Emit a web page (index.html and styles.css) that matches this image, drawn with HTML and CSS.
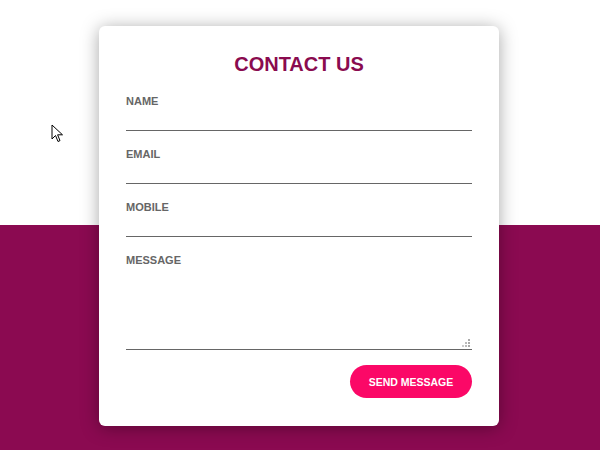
FILE: index.html
```html
<!DOCTYPE html>
<html>
<head>
	<title>Contact Us</title>
	<link rel="stylesheet" href="styles.css">
</head>
<body>
	<svg class="pointer" width="14" height="20" viewBox="0 0 14 20">
		<path d="M1 1 L1 15 L4.5 11.5 L7 17.5 L9 16.6 L6.6 10.8 L11.5 10.8 Z" fill="#fff" stroke="#000" stroke-width="1" stroke-linejoin="miter"/>
	</svg>
	<form class="contact-card">
		<h1 class="title">CONTACT US</h1>
		<div class="field">
			<label for="name">NAME</label>
			<input type="text" id="name" name="name">
		</div>
		<div class="field">
			<label for="email">EMAIL</label>
			<input type="text" id="email" name="email">
		</div>
		<div class="field">
			<label for="mobile">MOBILE</label>
			<input type="text" id="mobile" name="mobile">
		</div>
		<div class="field message">
			<label for="message">MESSAGE</label>
			<textarea id="message" name="message"></textarea>
			<svg class="grip" width="8" height="8" viewBox="0 0 8 8">
				<rect x="6" y="0" width="2" height="2" fill="#aaa"/>
				<rect x="3" y="3" width="2" height="2" fill="#bbb"/>
				<rect x="6" y="3" width="2" height="2" fill="#aaa"/>
				<rect x="0" y="6" width="2" height="2" fill="#ccc"/>
				<rect x="3" y="6" width="2" height="2" fill="#bbb"/>
				<rect x="6" y="6" width="2" height="2" fill="#aaa"/>
			</svg>
		</div>
		<div class="actions">
			<button type="button" class="send">SEND MESSAGE</button>
		</div>
	</form>
</body>
</html>
```

FILE: styles.css
```css
html, body {
	margin: 0;
	height: 450px;
}
body {
	position: relative;
	padding-top: 26px;
	box-sizing: border-box;
	font-family: "Liberation Sans", Arial, sans-serif;
	background: linear-gradient(to bottom, #ffffff 0, #ffffff 225px, #8b0a51 225px, #8b0a51 100%);
	overflow: hidden;
}
.pointer {
	position: absolute;
	left: 51px;
	top: 124px;
}
.contact-card {
	width: 400px;
	height: 400px;
	box-sizing: border-box;
	margin: 0 0 0 99px;
	padding: 24px 27px 28px;
	background: #fff;
	border-radius: 6px;
	box-shadow: 0 2px 18px rgba(0, 0, 0, 0.35);
	display: flex;
	flex-direction: column;
}
.title {
	margin: 0 0 16px;
	font-size: 20px;
	line-height: 28px;
	text-align: center;
	color: #8a0b4f;
	font-weight: bold;
}
.field {
	position: relative;
	display: flex;
	flex-direction: column;
	margin-bottom: 16px;
}
.field label {
	font-size: 11px;
	line-height: 14px;
	font-weight: bold;
	color: #666;
}
.field input,
.field textarea {
	border: none;
	border-bottom: 1px solid #666;
	outline: none;
	padding: 0;
	margin: 0;
	font-family: inherit;
	font-size: 13px;
	background: transparent;
	box-sizing: border-box;
}
.field input {
	height: 23px;
}
.field textarea {
	height: 83px;
	resize: none;
}
.field.message {
	margin-bottom: 15px;
}
.grip {
	position: absolute;
	right: 2px;
	bottom: 3px;
}
.actions {
	display: flex;
	justify-content: flex-end;
}
.send {
	width: 122px;
	height: 33px;
	border: none;
	border-radius: 17px;
	background: #fb0867;
	color: #fff;
	font-family: inherit;
	font-size: 10.5px;
	font-weight: bold;
	padding: 0;
	cursor: pointer;
}
```
